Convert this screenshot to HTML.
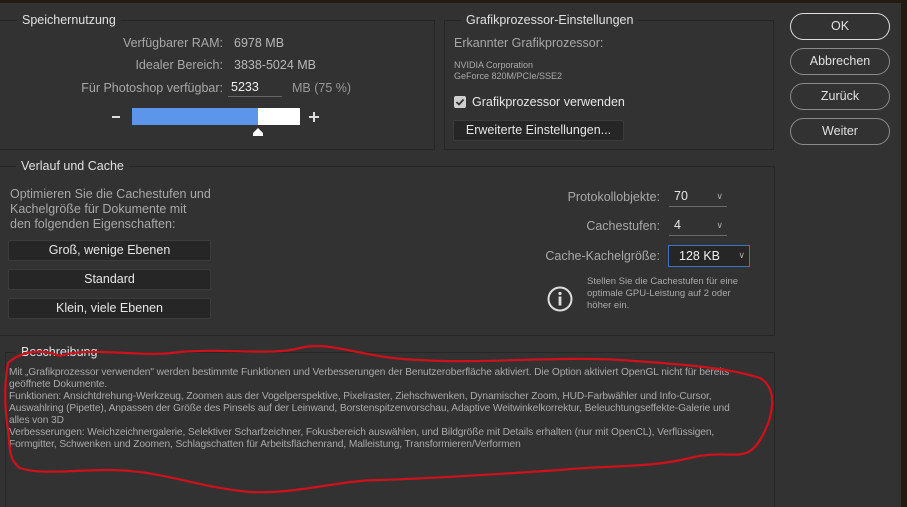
<!DOCTYPE html>
<html><head><meta charset="utf-8"><style>
*{margin:0;padding:0;box-sizing:border-box}
html{width:907px;height:507px;overflow:hidden}
body{width:907px;height:507px;overflow:hidden;background:#323232;font-family:"Liberation Sans",sans-serif;color:#c8c8c8;position:relative}
.a{position:absolute;white-space:nowrap}
.box{position:absolute;border:1px solid #262626}
.lg{position:absolute;background:#323232;padding:0 5px;font-size:12.5px;color:#e0e0e0}
.lbl{font-size:12.5px;color:#a8a8a8}
.val{font-size:12.5px;color:#b8b8b8}
.btn{position:absolute;background:#262626;border:1px solid #3c3c3c;border-radius:2px;font-size:12.5px;color:#e6e6e6;text-align:center}
.rb{position:absolute;left:790px;width:100px;height:27px;border:1px solid #8a8a8a;border-radius:14px;font-size:12.5px;color:#e0e0e0;text-align:center;line-height:25px}
.sel{position:absolute;border-bottom:1px solid #6a6a6a;font-size:12.5px;color:#e6e6e6}
.chev{position:absolute;right:4px;top:2px;font-size:9px;color:#aaa}
</style></head><body>
<div class="a" style="left:0;top:0;width:907px;height:3px;background:#231a12"></div>
<div class="a" style="left:901px;top:0;width:6px;height:507px;background:#231a12"></div>

<div class="box" style="left:-1px;top:20px;width:436px;height:130px"></div>
<div class="lg" style="left:17px;top:13px">Speichernutzung</div>
<div class="a lbl" style="right:684px;top:36px">Verfügbarer RAM:</div>
<div class="a val" style="left:234px;top:36px">6978 MB</div>
<div class="a lbl" style="right:684px;top:58px">Idealer Bereich:</div>
<div class="a val" style="left:234px;top:58px">3838-5024 MB</div>
<div class="a lbl" style="right:684px;top:81px">Für Photoshop verfügbar:</div>
<div class="a" style="left:228px;top:80px;width:54px;height:17px;border-bottom:1px solid #666;font-size:12.5px;color:#eee;padding-left:3px">5233</div>
<div class="a val" style="left:292px;top:81px;color:#999">MB (75 %)</div>
<div class="a" style="left:112px;top:116px;width:8px;height:2px;background:#ddd"></div>
<div class="a" style="left:132px;top:108px;width:126px;height:17px;background:#5b96ea"></div>
<div class="a" style="left:258px;top:108px;width:42px;height:17px;background:#fff"></div>
<div class="a" style="left:309px;top:116px;width:10px;height:2px;background:#ddd"></div>
<div class="a" style="left:313px;top:112px;width:2px;height:10px;background:#ddd"></div>
<svg class="a" style="left:252px;top:127px" width="12" height="10"><path d="M1 9 L1 6 L6 1 L11 6 L11 9 Z" fill="#fff"/></svg>

<div class="box" style="left:444px;top:20px;width:330px;height:130px"></div>
<div class="lg" style="left:461px;top:13px">Grafikprozessor-Einstellungen</div>
<div class="a lbl" style="left:454px;top:36px">Erkannter Grafikprozessor:</div>
<div class="a" style="left:454px;top:60px;font-size:9px;color:#aaa;line-height:11px">NVIDIA Corporation<br>GeForce 820M/PCIe/SSE2</div>
<div class="a" style="left:454px;top:96px;width:12px;height:12px;background:#cfcfcf;border-radius:2px"></div>
<svg class="a" style="left:454px;top:96px" width="12" height="12"><path d="M2.5 6 L5 8.5 L9.5 3.5" stroke="#333" stroke-width="1.8" fill="none"/></svg>
<div class="a" style="left:472px;top:95px;font-size:12.5px;color:#e6e6e6">Grafikprozessor verwenden</div>
<div class="btn" style="left:453px;top:120px;width:171px;height:21px;line-height:19px">Erweiterte Einstellungen...</div>

<div class="rb" style="top:13px;border-color:#ddd">OK</div>
<div class="rb" style="top:48px">Abbrechen</div>
<div class="rb" style="top:83px">Zurück</div>
<div class="rb" style="top:118px">Weiter</div>

<div class="box" style="left:-1px;top:166px;width:776px;height:170px"></div>
<div class="lg" style="left:16px;top:159px">Verlauf und Cache</div>
<div class="a lbl" style="left:10px;top:187px;line-height:15px;font-size:12.5px">Optimieren Sie die Cachestufen und<br>Kachelgröße für Dokumente mit<br>den folgenden Eigenschaften:</div>
<div class="btn" style="left:8px;top:240px;width:203px;height:21px;line-height:19px">Groß, wenige Ebenen</div>
<div class="btn" style="left:8px;top:269px;width:203px;height:21px;line-height:19px">Standard</div>
<div class="btn" style="left:8px;top:298px;width:203px;height:21px;line-height:19px">Klein, viele Ebenen</div>
<div class="a lbl" style="right:247px;top:190px">Protokollobjekte:</div>
<div class="sel" style="left:669px;top:189px;width:58px;height:18px;padding-left:5px">70<span class="chev">&#8744;</span></div>
<div class="a lbl" style="right:247px;top:219px">Cachestufen:</div>
<div class="sel" style="left:669px;top:218px;width:58px;height:18px;padding-left:5px">4<span class="chev">&#8744;</span></div>
<div class="a lbl" style="right:247px;top:249px">Cache-Kachelgröße:</div>
<div class="a" style="left:668px;top:245px;width:82px;height:22px;border:1px solid #3f74c4;background:#262626;font-size:12.5px;color:#eee;padding:3px 0 0 10px">128 KB<span class="chev" style="top:4px">&#8744;</span></div>
<svg class="a" style="left:546px;top:285px" width="28" height="28"><circle cx="14" cy="14" r="11.5" stroke="#ddd" stroke-width="2" fill="none"/><circle cx="14" cy="8.5" r="1.6" fill="#ddd"/><rect x="12.6" y="11.5" width="2.8" height="9" fill="#ddd"/></svg>
<div class="a" style="left:587px;top:276px;font-size:9.5px;color:#aaa;line-height:12px">Stellen Sie die Cachestufen für eine<br>optimale GPU-Leistung auf 2 oder<br>höher ein.</div>

<div class="box" style="left:5px;top:352px;width:770px;height:155px;border-bottom:none"></div>
<div class="lg" style="left:16px;top:345px">Beschreibung</div>
<div class="a" style="left:9px;top:367px;font-size:10.2px;color:#aaa;line-height:12px;letter-spacing:-0.1px">Mit „Grafikprozessor verwenden" werden bestimmte Funktionen und Verbesserungen der Benutzeroberfläche aktiviert. Die Option aktiviert OpenGL nicht für bereits<br>geöffnete Dokumente.<br>Funktionen: Ansichtdrehung-Werkzeug, Zoomen aus der Vogelperspektive, Pixelraster, Ziehschwenken, Dynamischer Zoom, HUD-Farbwähler und Info-Cursor,<br>Auswahlring (Pipette), Anpassen der Größe des Pinsels auf der Leinwand, Borstenspitzenvorschau, Adaptive Weitwinkelkorrektur, Beleuchtungseffekte-Galerie und<br>alles von 3D<br>Verbesserungen: Weichzeichnergalerie, Selektiver Scharfzeichner, Fokusbereich auswählen, und Bildgröße mit Details erhalten (nur mit OpenCL), Verflüssigen,<br>Formgitter, Schwenken und Zoomen, Schlagschatten für Arbeitsflächenrand, Malleistung, Transformieren/Verformen</div>

<svg class="a" style="left:0;top:330px" width="790" height="177"><path d="M8 33 C20 22 40 18 60 26 C90 16 140 28 180 22 C230 18 270 26 300 18 C330 10 360 28 420 30 C480 34 560 26 620 30 C680 34 730 38 760 48 C780 60 772 90 760 110 C745 135 730 118 690 128 C650 138 610 135 560 140 C500 144 440 148 380 150 C340 150 300 164 250 162 C200 158 160 140 110 140 C70 140 40 145 20 138 C8 130 10 115 8 100 C5 80 4 55 8 33 Z" stroke="#d0101a" stroke-width="2.2" fill="none"/></svg>
</body></html>
